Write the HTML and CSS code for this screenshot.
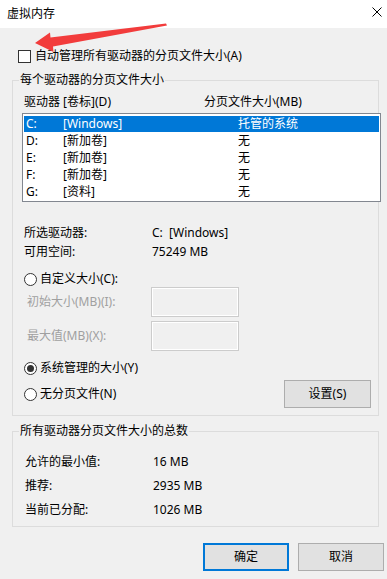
FILE: index.html
```html
<!DOCTYPE html>
<html lang="zh-CN">
<head>
<meta charset="utf-8">
<title>虚拟内存</title>
<link rel="stylesheet" href="styles.css">
</head>
<body>
<div class="window">
  <div class="titlebar">
    <span class="title">虚拟内存</span>
    <svg class="close" width="10" height="10" viewBox="0 0 10 10"><path d="M0.5 0.5 L9.5 9.5 M9.5 0.5 L0.5 9.5" stroke="#000" stroke-width="1" fill="none"/></svg>
  </div>
  <div class="content">
    <div class="check-row"><span class="checkbox"></span><span>自动管理所有驱动器的分页文件大小(A)</span></div>

    <fieldset class="group">
      <legend>每个驱动器的分页文件大小</legend>
      <div class="group-body drives">
        <div class="list-head"><span class="h1">驱动器 [卷标](D)</span><span>分页文件大小(MB)</span></div>
        <div class="listbox">
          <div class="row selected"><span class="c1">C:</span><span class="c2">[Windows]</span><span>托管的系统</span></div>
          <div class="row"><span class="c1">D:</span><span class="c2">[新加卷]</span><span>无</span></div>
          <div class="row"><span class="c1">E:</span><span class="c2">[新加卷]</span><span>无</span></div>
          <div class="row"><span class="c1">F:</span><span class="c2">[新加卷]</span><span>无</span></div>
          <div class="row"><span class="c1">G:</span><span class="c2">[资料]</span><span>无</span></div>
        </div>
        <div class="info">
          <div class="info-row"><span class="label">所选驱动器:</span><span>C:&nbsp;&nbsp;[Windows]</span></div>
          <div class="info-row"><span class="label">可用空间:</span><span>75249 MB</span></div>
        </div>
        <div class="radio-row first"><span class="radio"></span><span>自定义大小(C):</span></div>
        <div class="field-row"><span class="field-label">初始大小(MB)(I):</span><span class="textbox"></span></div>
        <div class="field-row second"><span class="field-label">最大值(MB)(X):</span><span class="textbox"></span></div>
        <div class="radio-row sys"><span class="radio checked"></span><span>系统管理的大小(Y)</span></div>
        <div class="last-row">
          <div class="radio-row"><span class="radio"></span><span>无分页文件(N)</span></div>
          <button class="btn set">设置(S)</button>
        </div>
      </div>
    </fieldset>

    <fieldset class="group total">
      <legend>所有驱动器分页文件大小的总数</legend>
      <div class="group-body totals">
        <div class="total-row"><span class="label">允许的最小值:</span><span>16 MB</span></div>
        <div class="total-row"><span class="label">推荐:</span><span>2935 MB</span></div>
        <div class="total-row"><span class="label">当前已分配:</span><span>1026 MB</span></div>
      </div>
    </fieldset>

    <div class="actions">
      <button class="btn default">确定</button>
      <button class="btn">取消</button>
    </div>
  </div>

  <svg class="arrow" width="387" height="579" viewBox="0 0 387 579">
    <polygon points="35,43 50,32.5 50.5,37.5 166,23.5 167,25.5 53,46.5 53.5,52" fill="#f23c3c"/>
  </svg>
</div>
</body>
</html>
```

FILE: styles.css
```css
* { box-sizing: border-box; }

html, body {
  margin: 0;
  padding: 0;
}

body {
  background: #f0f0f0;
  font-family: "Noto Sans", "Noto Sans CJK SC", sans-serif;
  font-size: 12px;
  line-height: 16px;
  color: #000;
}

.window {
  position: relative;
  width: 387px;
  height: 579px;
  overflow: hidden;
  background: #f0f0f0;
}

.titlebar {
  height: 28px;
  background: #fff;
  display: flex;
  align-items: center;
  justify-content: space-between;
  padding: 0 5px 0 7px;
}

.close {
  display: block;
  margin-top: -4px;
}

.content {
  padding: 0 8px 0 12px;
}

.check-row {
  margin-top: 20px;
  height: 16px;
  display: flex;
  align-items: center;
  padding-left: 6px;
  gap: 4px;
}

.checkbox {
  width: 13px;
  height: 13px;
  border: 1px solid #333;
  background: #fff;
}

.group {
  margin: 8px 0 0 0;
  padding: 0;
  border: 1px solid #dcdcdc;
  min-width: 0;
}

.group legend {
  margin-left: 6px;
  padding: 0 1px;
  line-height: 16px;
}

.group-body.drives {
  padding: 6px 7px 7px 11px;
}

.list-head {
  display: flex;
  height: 16px;
}

.list-head .h1 {
  width: 180px;
}

.listbox {
  margin: 3px 0 0 -2px;
  width: 359px;
  border: 1px solid #828790;
  background: #fff;
  padding: 2px 1px 1px 1px;
  display: flex;
  flex-direction: column;
  gap: 1px;
}

.row {
  height: 16px;
  display: flex;
  padding-left: 2px;
}

.row.selected {
  background: #0078d7;
  color: #fff;
}

.c1 { width: 37px; }
.c2 { width: 175px; }

.info {
  margin-top: 23px;
  display: flex;
  flex-direction: column;
  gap: 3px;
}

.info-row {
  display: flex;
  height: 16px;
}

.info-row .label { width: 128px; }

.radio-row {
  display: flex;
  align-items: center;
  gap: 3px;
  height: 16px;
}

.radio-row.first { margin-top: 11px; }
.radio-row.sys { margin-top: 9px; }

.radio {
  width: 13px;
  height: 13px;
  border: 1px solid #333;
  border-radius: 50%;
  background: #fff;
  display: flex;
  align-items: center;
  justify-content: center;
}

.radio.checked::after {
  content: "";
  width: 7px;
  height: 7px;
  border-radius: 50%;
  background: #333;
}

.field-row {
  display: flex;
  align-items: center;
  height: 30px;
}

.field-row.second { margin-top: 4px; }

.field-label {
  width: 127px;
  padding-left: 3px;
  color: #a0a0a0;
}

.textbox {
  width: 88px;
  height: 30px;
  border: 1px solid #cccccc;
  box-shadow: inset 0 0 0 1px #ffffff;
  background: #f0f0f0;
}

.last-row {
  margin-top: 4px;
  display: flex;
  align-items: center;
  justify-content: space-between;
  height: 28px;
  margin-top: 4px;
}

.btn {
  font-family: inherit;
  font-size: 12px;
  line-height: 16px;
  color: #000;
  background: #e1e1e1;
  border: 1px solid #adadad;
  border-radius: 0;
  padding: 0;
  margin: 0;
  height: 28px;
}

.btn.set {
  width: 87px;
}

.group.total {
  margin-top: 7px;
}

.group-body.totals {
  padding: 11px 0 4px 12px;
}

.total-row {
  display: flex;
  height: 24px;
  align-items: center;
}

.total-row .label { width: 128px; }

.actions {
  margin: 16px -5px 0 0;
  display: flex;
  justify-content: flex-end;
  gap: 9px;
}

.actions .btn {
  width: 86px;
  height: 28px;
}

.btn.default {
  border: 2px solid #0078d7;
}

.arrow {
  position: absolute;
  left: 0;
  top: 0;
  pointer-events: none;
}
```
